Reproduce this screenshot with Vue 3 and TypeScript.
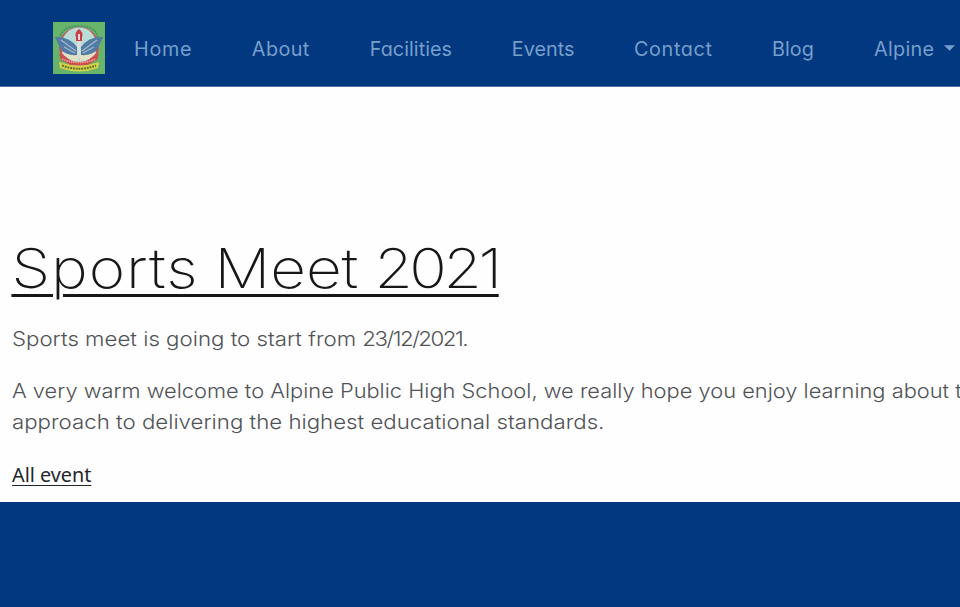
<script setup lang="ts">
interface NavItem {
  label: string
  width: number
  spacing: number
  dropdown?: boolean
}

const navItems: NavItem[] = [
  { label: 'Home', width: 58, spacing: 0.7 },
  { label: 'About', width: 58, spacing: 0.4 },
  { label: 'Facilities', width: 82.3, spacing: 0.05 },
  { label: 'Events', width: 62.3, spacing: 0 },
  { label: 'Contact', width: 78.3, spacing: 0.65 },
  { label: 'Blog', width: 42, spacing: 0 },
  { label: 'Alpine', width: 60, spacing: 0.3, dropdown: true },
]
</script>

<template>
  <div class="page">
    <header class="navbar">
      <a class="brand" href="#" aria-label="School home">
        <svg viewBox="0 0 52 52" width="52" height="52">
          <rect width="52" height="52" fill="#68b46b" />
          <path d="M7 17Q8 4 26 4Q44 4 45 17" fill="none" stroke="#4b9265" stroke-width="2" stroke-dasharray="2 1" />
          <circle cx="26" cy="25" r="20" fill="#c9575c" />
          <circle cx="26" cy="23" r="17.5" fill="#b9dcd6" />
          <path d="M11 25Q19 31 25 32V39Q14 38 9 31ZM41 25Q33 31 27 32V39Q38 38 43 31Z" fill="#e4e2c5" />
          <path d="M2 15Q16 14 24 25V33Q14 34 8 28ZM50 15Q36 14 28 25V33Q38 34 44 28Z" fill="#527ba5" />
          <path d="M8 18L23 29M11 25L22 31M44 18L29 29M41 25L30 31" stroke="#a1b9c8" stroke-width="1.3" />
          <path d="M26 7Q21 11 23 15V19H29V15Q31 11 26 7Z" fill="#c93c47" />
          <path d="M25 12H27V18H25Z" fill="#edd8cd" />
          <path d="M24 19H28L27 36H25Z" fill="#d7dedb" />
          <path d="M6 31Q14 40 26 40Q38 40 46 31L44 38Q26 47 8 38Z" fill="#cf4b47" />
          <path d="M9 37Q26 44 43 37" fill="none" stroke="#e9aaa0" stroke-width="1.5" stroke-dasharray="1.5 .8" />
          <path d="M6 40Q26 47 46 40L45 46Q26 53 7 46Z" fill="#d5d34b" />
          <path d="M9 43.5Q26 50 43 43.5" fill="none" stroke="#667329" stroke-width="2" stroke-dasharray="2 .8" />
        </svg>
      </a>
      <nav class="nav">
        <a v-for="item in navItems" :key="item.label" class="nav-link" href="#">
          <span class="label" :style="{ width: item.width + 'px', letterSpacing: item.spacing + 'px' }">{{ item.label }}</span>
          <svg v-if="item.dropdown" class="caret" viewBox="0 0 12 6" width="11" height="6"><path d="M0 0H12L6 6Z" fill="currentColor" /></svg>
        </a>
      </nav>
    </header>
    <main class="content">
      <h1><a href="#"><span class="sports">Sports </span><span class="meet">Meet </span><span class="year">2021</span></a></h1>
      <p class="date"><span class="line">Sports meet is going to start from <span class="digits">23/12/2021.</span></span></p>
      <p class="welcome"><span class="line first">A very warm welcome to Alpine Public High School, we really hope you enjoy learning about the</span><br /><span class="line second">approach to delivering the highest educational standards.</span></p>
      <a class="all" href="#">All event</a>
    </main>
  </div>
</template>

<style>
body { margin: 0; overflow: hidden; background: #013880; }
</style>

<style scoped>
.page { height: 607px; overflow: hidden; background: #013880; font-family: Inter, "Liberation Sans", sans-serif; }
.navbar { box-sizing: border-box; height: 87px; padding: 22px 0 0 53px; display: flex; align-items: flex-start; border-bottom: 1px solid #50729e; }
.brand { display: block; width: 52px; height: 52px; margin-right: 29px; flex: none; }
.brand svg { display: block; }
.nav { display: flex; gap: 59.85px; height: 53px; align-items: center; }
.nav-link { display: flex; align-items: center; color: #779fcb; font-size: 19.8px; font-feature-settings: "cv11"; text-decoration: none; white-space: nowrap; }
.label { display: block; flex: none; }
.caret { margin-left: 10.5px; flex: none; position: relative; top: -1px; }
.content { box-sizing: border-box; height: 415px; padding: 147px 0 0 12px; background: #fefefe; color: #212529; white-space: nowrap; overflow: hidden; }
h1 { margin: 0; font-size: 55px; line-height: 68px; font-weight: 200; }
h1 a { display: inline-block; transform: scaleX(1.13); transform-origin: left; color: #151719; text-decoration-thickness: 3px; text-underline-offset: 6px; }
.sports { letter-spacing: 0.8px; margin-left: -0.5px; }
.meet { letter-spacing: -0.1px; margin-left: -2px; }
.year { letter-spacing: -3px; margin-left: -1px; }
p { margin: 0; font-size: 20px; line-height: 31px; font-weight: 300; color: #505356; }
.line { display: inline-block; transform: scaleX(1.112); transform-origin: left; }
.first { transform: scaleX(1.0915); }
.digits { letter-spacing: -1.35px; }
.date { margin-top: 22px; }
.welcome { margin-top: 21px; }
.all { display: inline-block; margin-top: 21px; font-family: "Noto Sans", sans-serif; font-size: 19.8px; line-height: 31px; color: #212529; text-underline-offset: 3px; text-decoration-thickness: 1px; }
</style>
